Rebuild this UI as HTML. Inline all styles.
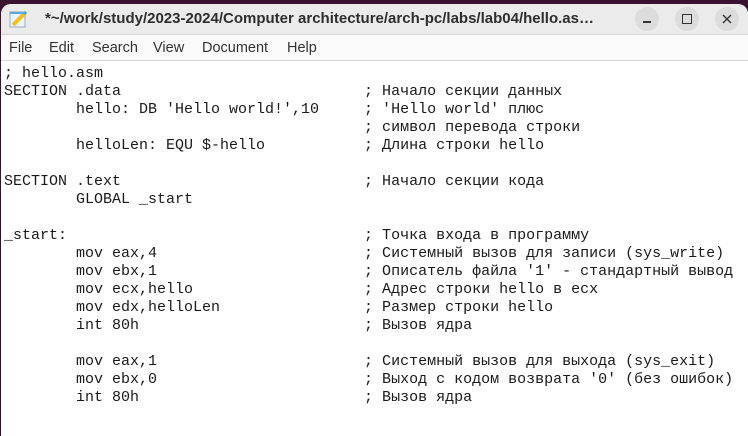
<!DOCTYPE html>
<html><head><meta charset="utf-8"><style>
html,body{margin:0;padding:0;width:748px;height:436px;overflow:hidden;background:#3a1230;}
.win{position:absolute;left:1px;top:4px;width:747px;height:432px;background:#fff;border-radius:10px 10px 0 0;overflow:hidden;}
.title{height:30px;background:#ebebeb;border-bottom:1px solid #d6d6d6;position:relative;font-family:"Liberation Sans","DejaVu Sans",sans-serif;font-weight:bold;font-size:15px;color:#2e2e2e;}
.title .t{position:absolute;left:44px;top:6px;}
.btn{position:absolute;top:3px;width:24px;height:24px;border-radius:12px;background:#dcdcdc;}
.menu{height:25px;background:#fafafa;border-bottom:1px solid #d8d8d8;font-family:"Liberation Sans","DejaVu Sans",sans-serif;font-size:14.5px;color:#333;position:relative;}
.menu span{position:absolute;top:5px;}
pre{margin:0;position:absolute;left:4px;top:65px;font-family:"Liberation Mono","DejaVu Sans Mono",monospace;font-size:15px;line-height:18px;color:#1a1a1a;tab-size:8;}
</style></head><body>
<div class="win">
<div class="title">
<svg style="position:absolute;left:8px;top:5px" width="20" height="20" viewBox="0 0 20 20"><rect x="1" y="3" width="15" height="15" fill="#e8f4fb" stroke="#9ab" stroke-width="1"/><path d="M4 16 L16 4" stroke="#f2c21b" stroke-width="4"/><path d="M15 3 L17 5" stroke="#4a9ad8" stroke-width="3"/><rect x="1" y="3" width="15" height="2" fill="#5aa7e0"/></svg>
<span class="t">*~/work/study/2023-2024/Computer architecture/arch-pc/labs/lab04/hello.as…</span>
<div class="btn" style="left:634px"><div style="position:absolute;left:8px;top:14px;width:8px;height:1.5px;background:#333"></div></div>
<div class="btn" style="left:674px"><div style="position:absolute;left:7px;top:7px;width:8px;height:8px;border:1.3px solid #333"></div></div>
<div class="btn" style="left:714px"><svg width="24" height="24"><path d="M8 8 L16 16 M16 8 L8 16" stroke="#333" stroke-width="1.4"/></svg></div>
</div>
<div class="menu"><span style="left:8px">File</span><span style="left:48px">Edit</span><span style="left:91px">Search</span><span style="left:152px">View</span><span style="left:201px">Document</span><span style="left:286px">Help</span></div>
</div>
<div style="position:absolute;left:0;top:60px;width:1px;height:376px;background:#3a1230"></div>
<pre>; hello.asm
SECTION .data                           ; Начало секции данных
        hello: DB 'Hello world!',10     ; 'Hello world' плюс
                                        ; символ перевода строки
        helloLen: EQU $-hello           ; Длина строки hello

SECTION .text                           ; Начало секции кода
        GLOBAL _start

_start:                                 ; Точка входа в программу
        mov eax,4                       ; Системный вызов для записи (sys_write)
        mov ebx,1                       ; Описатель файла '1' - стандартный вывод
        mov ecx,hello                   ; Адрес строки hello в ecx
        mov edx,helloLen                ; Размер строки hello
        int 80h                         ; Вызов ядра

        mov eax,1                       ; Системный вызов для выхода (sys_exit)
        mov ebx,0                       ; Выход с кодом возврата '0' (без ошибок)
        int 80h                         ; Вызов ядра
</pre>
</body></html>
